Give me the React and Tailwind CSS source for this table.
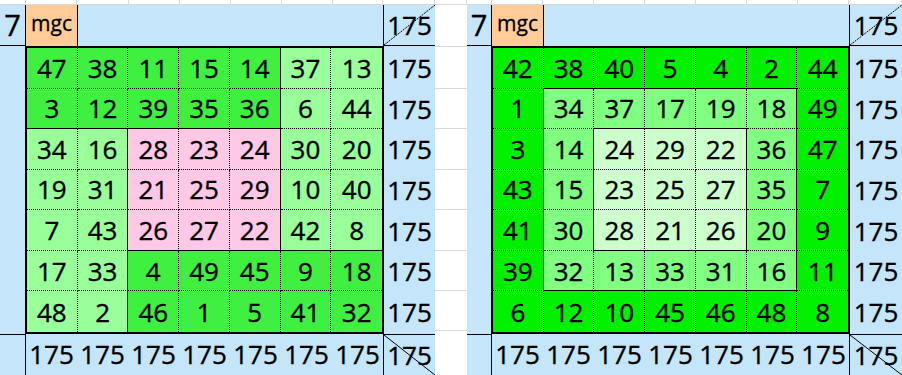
import React from "react";

const FONT = "font-['Open_Sans',sans-serif]";
const BLUE = "bg-[#c5e5fb]";

// border lookups: same region -> dotted, region edge -> solid
const R_SOLID = "[border-right:1px_solid_#000]";
const R_DOT = "[border-right:1px_dotted_#000]";
const B_SOLID = "[border-bottom:1px_solid_#000]";
const B_DOT = "[border-bottom:1px_dotted_#000]";

const LEFT = {
  nums: [
    [47, 38, 11, 15, 14, 37, 13],
    [3, 12, 39, 35, 36, 6, 44],
    [34, 16, 28, 23, 24, 30, 20],
    [19, 31, 21, 25, 29, 10, 40],
    [7, 43, 26, 27, 22, 42, 8],
    [17, 33, 4, 49, 45, 9, 18],
    [48, 2, 46, 1, 5, 41, 32],
  ],
  regions: ["BBBBBLL", "BBBBBLL", "LLPPPLL", "LLPPPLL", "LLPPPLL", "LLBBBBB", "LLBBBBB"],
  colors: { B: "bg-[#40f040]", L: "bg-[#99ff99]", P: "bg-[#ffc8e4]" },
  strip: [26, 51, 52, 51, 51, 51, 51, 50, 52],
  sevenW: "w-[25px]",
  rightW: "w-[51px]",
};

const RIGHT = {
  nums: [
    [42, 38, 40, 5, 4, 2, 44],
    [1, 34, 37, 17, 19, 18, 49],
    [3, 14, 24, 29, 22, 36, 47],
    [43, 15, 23, 25, 27, 35, 7],
    [41, 30, 28, 21, 26, 20, 9],
    [39, 32, 13, 33, 31, 16, 11],
    [6, 12, 10, 45, 46, 48, 8],
  ],
  regions: ["OOOOOOO", "OMMMMMO", "OMIIIMO", "OMIIIMO", "OMIIIMO", "OMMMMMO", "OOOOOOO"],
  colors: { O: "bg-[#00f000]", M: "bg-[#80ff80]", I: "bg-[#ccffcc]" },
  strip: [25, 51, 51, 51, 51, 51, 51, 51, 53],
  sevenW: "w-[24px]",
  rightW: "w-[52px]",
};

const NUM =
  "flex items-center justify-center text-[26px] leading-none text-black [-webkit-text-stroke:0.35px_#000]";

const Square = ({ nums, regions, colors }) => (
  <div className="grid grid-cols-7 grid-rows-7 w-[359px] h-[288px] border-2 border-black">
    {nums.map((row, r) =>
      row.map((n, c) => {
        const reg = regions[r][c];
        const parts = [colors[reg]];
        if (c < 6) parts.push(regions[r][c + 1] === reg ? R_DOT : R_SOLID);
        if (r < 6) parts.push(regions[r + 1][c] === reg ? B_DOT : B_SOLID);
        return (
          <div key={`${r}-${c}`} className={`${parts.join(" ")} ${NUM}`}>
            {n}
          </div>
        );
      })
    )}
  </div>
);

const Panel = ({ data }) => {
  const { strip, sevenW, rightW } = data;
  return (
    <div className="flex flex-col w-[435px] shrink-0">
      {/* sheet gridlines above */}
      <div className="flex h-[5px] bg-white">
        {strip.map((w, i) => (
          <div
            key={i}
            style={{ width: w }}
            className="h-full border-r border-b border-[#d9d9d9]"
          />
        ))}
      </div>

      {/* header row */}
      <div className="flex h-[42px]">
        <div className={`${sevenW} ${BLUE} border-b border-black flex items-center justify-center text-[29px] leading-none text-black [-webkit-text-stroke:0.35px_#000]`}>
          7
        </div>
        <div className={`w-[359px] flex ${BLUE} border-r border-black`}>
          <div className="w-[53px] h-full bg-[#ffcc99] border-l border-r border-black flex items-center justify-center text-[21px] leading-none pb-[4px] text-black [-webkit-text-stroke:0.3px_#000]">
            mgc
          </div>
        </div>
        <div className={`${rightW} relative ${BLUE} border-b border-black ${NUM}`}>
          <svg className="absolute inset-0 w-full h-full" preserveAspectRatio="none" viewBox="0 0 52 42">
            <line x1="0" y1="42" x2="52" y2="0" stroke="#000" strokeWidth="1" strokeDasharray="2 1" vectorEffect="non-scaling-stroke" />
          </svg>
          <span className="relative">175</span>
        </div>
      </div>

      {/* body */}
      <div className="flex h-[288px]">
        <div className={`${sevenW} ${BLUE}`} />
        <Square {...data} />
        <div className={`${rightW} ${BLUE} flex flex-col py-[2px]`}>
          {data.nums.map((_, i) => (
            <div key={i} className={`flex-1 ${NUM}`}>
              175
            </div>
          ))}
        </div>
      </div>

      {/* totals row */}
      <div className="flex h-[42px]">
        <div className={`${sevenW} ${BLUE} border-t border-black`} />
        <div className={`w-[359px] grid grid-cols-7 ${BLUE} border-l border-r border-black`}>
          {data.nums.map((_, i) => (
            <div key={i} className={NUM}>
              175
            </div>
          ))}
        </div>
        <div className={`${rightW} relative ${BLUE} border-t border-black ${NUM}`}>
          <svg className="absolute inset-0 w-full h-full" preserveAspectRatio="none" viewBox="0 0 52 42">
            <line x1="0" y1="0" x2="52" y2="42" stroke="#000" strokeWidth="1" vectorEffect="non-scaling-stroke" />
          </svg>
          <span className="relative">175</span>
        </div>
      </div>
    </div>
  );
};

const Gap = () => (
  <div className="flex flex-col w-[32px] shrink-0 bg-white">
    <div className="h-[5px] border-r border-b border-[#d9d9d9]" />
    <div className="h-[42px] border-b border-[#d9d9d9]" />
    <div className="h-[288px] flex flex-col py-[2px]">
      {[0, 1, 2, 3, 4, 5, 6].map((i) => (
        <div key={i} className="flex-1 border-b border-[#d9d9d9]" />
      ))}
    </div>
    <div className="h-[42px]" />
  </div>
);

export default function App() {
  return (
    <div className={`${FONT} w-[902px] h-[375px] overflow-hidden flex bg-white`}>
      <Panel data={LEFT} />
      <Gap />
      <Panel data={RIGHT} />
    </div>
  );
}
